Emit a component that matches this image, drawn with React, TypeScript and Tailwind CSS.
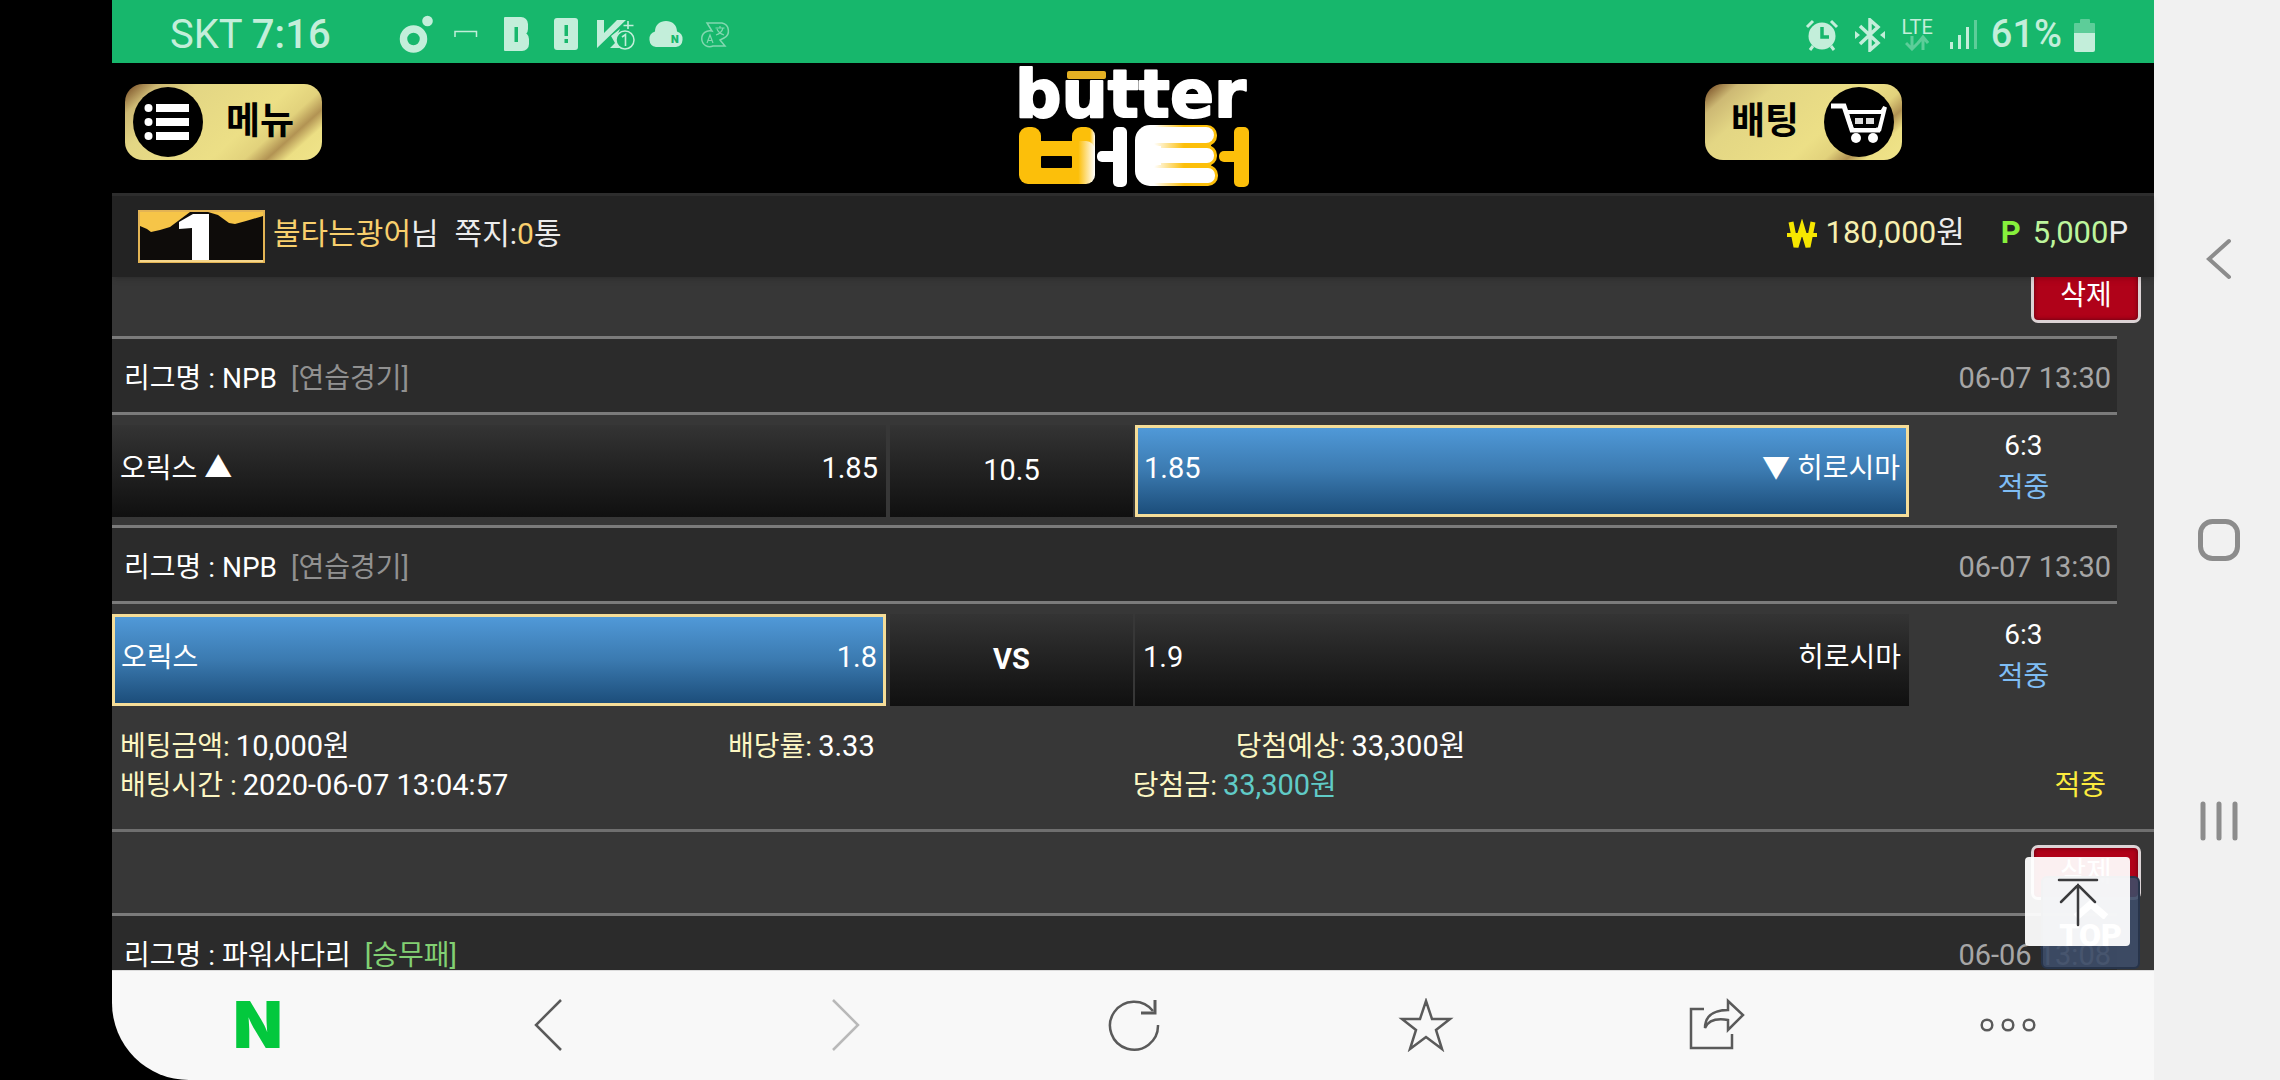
import type { ReactNode } from "react";

type Side = "home" | "away";

interface Game {
  id: number;
  league: string;
  kind: string;
  kindColor: string;
  date: string;
  home: string;
  homeRate: string;
  middle: string;
  middleBold?: boolean;
  awayRate: string;
  away: string;
  picked: Side;
  score: string;
  result: string;
}

const games: Game[] = [
  {
    id: 1, league: "NPB", kind: "[연습경기]", kindColor: "text-[#919191]", date: "06-07 13:30",
    home: "오릭스 ▲", homeRate: "1.85", middle: "10.5", awayRate: "1.85", away: "▼ 히로시마",
    picked: "away", score: "6:3", result: "적중",
  },
  {
    id: 2, league: "NPB", kind: "[연습경기]", kindColor: "text-[#919191]", date: "06-07 13:30",
    home: "오릭스", homeRate: "1.8", middle: "VS", middleBold: true, awayRate: "1.9", away: "히로시마",
    picked: "home", score: "6:3", result: "적중",
  },
];

/* ── Status bar icons ── */

const StatusIcons = () => (
  <svg width="332" height="40" viewBox="398 14 332 40" fill="#c3eeda">
    <circle cx="412.500" cy="38" r="10" fill="none" stroke="#c3eeda" strokeWidth="7.500" />
    <circle cx="426.500" cy="20" r="5.300" />
    <path d="M454 36v-5.500h21.500V36" fill="none" stroke="#c3eeda" strokeWidth="1.500" />
    {/* band */}
    <rect x="503" y="16" width="12" height="34" rx="1" />
    <rect x="507" y="16" width="20" height="19" rx="7" />
    <rect x="507" y="31" width="21" height="19" rx="7" />
    <rect x="513.500" y="26" width="3.500" height="15" fill="#17b76c" />
    {/* alert */}
    <rect x="553" y="17" width="24" height="32" rx="3" />
    <rect x="563.500" y="24" width="3.500" height="11" fill="#17b76c" />
    <rect x="563.500" y="38" width="3.500" height="4" fill="#17b76c" />
    {/* vaccine */}
    <path d="M596 19h7v13l13-13h9l-29 28z" />
    <path d="M610 35l9-7-4 9 4 10h-10l5-5z" />
    <circle cx="624" cy="39" r="9" fill="#17b76c" stroke="#c3eeda" strokeWidth="1.500" />
    <path d="M627 20v8M622.500 24.500h10M621 36l3.500-2.500V45" fill="none" stroke="#c3eeda" strokeWidth="1.600" />
    {/* cloud */}
    <path d="M655 46a8 8 0 0 1-1-15.500C654 24 659 20 665 20s11 4 11 10.500a8 8 0 0 1-1 15.500z" />
    <text x="670" y="42" fontSize="10" fontWeight="900" fontFamily="Inter" fill="#17b76c">N</text>
    {/* translate */}
    <g fill="none" stroke="#82d8b0" strokeWidth="1.500">
      <path d="M706 22h15a8 8 0 0 1 2 15l-4 2 5 6h-12a8 8 0 1 1-1-15z" />
      <path d="M706 42l3-8 3 8M707 39.500h4M714.500 27h9M719 25v2M722 27c-1 4-4 6-7 7M716 28c1 3 4 5 7 6" strokeWidth="1.200" />
    </g>
  </svg>
);

const AlarmIcon = () => (
  <svg width="34" height="34" viewBox="0 0 34 34" fill="none" stroke="#c3eeda">
    <circle cx="17" cy="18" r="13.500" fill="#c3eeda" stroke="none" />
    <path d="M17 9v10h7" stroke="#17b76c" strokeWidth="3.500" />
    <path d="M2 9l6-6M32 9l-6-6M5 32l3-4M29 32l-3-4" strokeWidth="3" />
  </svg>
);

const BluetoothIcon = () => (
  <svg width="30" height="34" viewBox="0 0 30 34" fill="none" stroke="#c3eeda" strokeWidth="3.500">
    <path d="M5 8l18 17-8 7V2l8 7L5 26" />
    <path d="M0 13l5 4-5 4zM30 13l-5 4 5 4z" fill="#c3eeda" stroke="none" />
  </svg>
);

const SignalIcon = () => (
  <svg width="30" height="32" viewBox="0 0 30 32">
    <rect x="1" y="23" width="3" height="7" fill="#c3eeda" />
    <rect x="9" y="16" width="3" height="14" fill="#c3eeda" />
    <rect x="17" y="8" width="3" height="22" fill="#c3eeda" />
    <rect x="25" y="1" width="3" height="29" fill="#5dcd99" />
  </svg>
);

const BatteryIcon = () => (
  <svg width="22" height="34" viewBox="0 0 22 34">
    <path d="M6 5V2a1 1 0 0 1 1-1h8a1 1 0 0 1 1 1v3h4a1 1 0 0 1 1 1v10H0V6a1 1 0 0 1 1-1z" fill="#5dcd99" />
    <path d="M0 15h21v17a2 2 0 0 1-2 2H2a2 2 0 0 1-2-2z" fill="#c3eeda" />
  </svg>
);

/* ── Site icons ── */

const ListIcon = () => (
  <svg width="70" height="70" viewBox="0 0 70 70">
    <circle cx="35" cy="35" r="35" fill="#000" />
    <g fill="#fff">
      <circle cx="15.500" cy="21" r="4" />
      <circle cx="15.500" cy="35" r="4" />
      <circle cx="15.500" cy="49" r="4" />
      <rect x="23" y="17" width="33" height="8" />
      <rect x="23" y="31" width="33" height="8" />
      <rect x="23" y="45" width="33" height="8" />
    </g>
  </svg>
);

const CartIcon = () => (
  <svg width="70" height="70" viewBox="0 0 70 70">
    <circle cx="35" cy="35" r="35" fill="#000" />
    <path d="M7 19h13l8 24h28" fill="none" stroke="#fff" strokeWidth="5" />
    <path d="M22 25h36l3-5-6 24" fill="none" stroke="#fff" strokeWidth="4" />
    <path d="M26 29h30l-4 12H30z" fill="#000" />
    <path d="M31 31h8v6h-8zM42 31h8v6h-8z" fill="#ddd" />
    <circle cx="32" cy="51" r="5" fill="#fff" />
    <circle cx="49" cy="51" r="5" fill="#fff" />
  </svg>
);

const Logo = () => (
  <svg width="228" height="118" viewBox="0 0 228 118" className="overflow-visible" role="img" aria-label="butter 버터">
    <defs>
      <linearGradient id="fade" x1="0" x2="1">
        <stop offset="0.780" stopColor="#fcbf0a" />
        <stop offset="1" stopColor="#fff" />
      </linearGradient>
      <linearGradient id="edge" gradientUnits="userSpaceOnUse" x1="135" x2="165" y1="0" y2="0">
        <stop offset="0" stopColor="#fff" />
        <stop offset="1" stopColor="#fcbf0a" />
      </linearGradient>
    </defs>
    <text
      x="-4" y="47" fontSize="65" fontWeight="700" fontFamily="DejaVu Sans"
      fill="#fff" stroke="#fff" strokeWidth="2" strokeLinejoin="round"
    >
      butter
    </text>
    <rect x="48" y="1" width="39" height="8" rx="2" fill="#e3b023" />
    <g fill="#fcbf0a">
      <rect x="0" y="57" width="22" height="40" rx="9" />
      <rect x="53" y="57" width="23" height="40" rx="9" fill="url(#fade)" />
      <rect x="0" y="71" width="76" height="43" rx="9" fill="url(#fade)" />
      <rect x="22" y="86" width="31" height="12" rx="1" fill="#000" />
    </g>
    <rect x="94" y="57" width="14" height="60" rx="5" fill="#fff" />
    <rect x="78" y="81" width="24" height="11" rx="5" fill="#fff" />
    <rect x="116" y="55" width="60" height="61" rx="15" fill="#fff" />
    <g fill="url(#edge)">
      <rect x="130" y="55" width="68" height="21" rx="10" />
      <rect x="142" y="74" width="50" height="24" />
      <rect x="140" y="75" width="58" height="21" rx="10" />
      <rect x="130" y="95" width="69" height="21" rx="10" />
    </g>
    <g fill="#fff">
      <rect x="124" y="57" width="71" height="16" rx="8" />
      <rect x="124" y="78" width="71" height="15" rx="7" />
      <rect x="124" y="98" width="72" height="15" rx="7" />
    </g>
    <rect x="215" y="57" width="15" height="60" rx="5" fill="#fcbf0a" />
    <rect x="200" y="81" width="24" height="11" rx="5" fill="#fcbf0a" />
  </svg>
);

const RankBadge = () => (
  <svg width="127" height="53" viewBox="0 0 127 53" role="img" aria-label="레벨 1">
    <rect x="1" y="1" width="125" height="51" fill="#0e0c0a" stroke="#e3b454" strokeWidth="2" />
    <path d="M2 2h123v4l-17 5-11 3-6-1-11-8-10-3H52l-12 9-8 6-10 3-9 2-4-3-7-3z" fill="#f6c548" />
    <path d="M41 19v-7l14-8h16v47H54V18z" fill="#fff" />
    <path d="M2 51h123" stroke="#f6d68a" strokeWidth="2" />
  </svg>
);

/* ── Browser toolbar icons ── */

const Stroke = ({ color = "#5a5a5a", children }: { color?: string; children: ReactNode }) => (
  <svg width="58" height="54" viewBox="0 0 58 54" fill="none" stroke={color} strokeWidth="2.500">
    {children}
  </svg>
);

function GoldButton({ children }: { children: ReactNode }) {
  return (
    <button
      type="button"
      className="flex h-[76px] w-[197px] items-center justify-between rounded-[18px] bg-[linear-gradient(138deg,#6d401c_0%,#cdb974_12%,#e3d684_26%,#ecdf86_60%,#e2d27c_72%,#b29353_80%,#ecdf84_87%,#f0e48a_100%)] px-2 text-[37px] font-bold text-black"
    >
      {children}
    </button>
  );
}

function DeleteButton() {
  return (
    <button
      type="button"
      className="h-[55px] w-[110px] shrink-0 rounded-[7px] border-3 border-[#dcd3d5] bg-[#b00219] text-[28px] leading-none text-white shadow-[inset_0_0_4px_#5a0010]"
    >
      삭제
    </button>
  );
}

function LeagueRow({ league, kind, kindColor, date }: Pick<Game, "league" | "kind" | "kindColor" | "date">) {
  return (
    <div className="mr-[37px] flex h-[79px] shrink-0 items-center justify-between border-y-3 border-[#7b7b7b] bg-[#2b2b2b] pt-1.5 pr-1.5 pl-3 text-[28px] text-white">
      <div className="flex gap-3.5">
        <span>리그명 : {league}</span>
        <span className={kindColor}>{kind}</span>
      </div>
      <span className="text-[29px] text-[#a6a6a6]">{date}</span>
    </div>
  );
}

function TeamCell({ left, right, picked, className }: { left: ReactNode; right: ReactNode; picked: boolean; className: string }) {
  return (
    <div
      className={`flex items-center justify-between pb-1 text-[28px] ${className} ${
        picked
          ? "border-3 border-[#f5dd98] bg-linear-to-b from-[#5099d8] via-[#3b7ab0] to-[#1c4e7b] px-1.5"
          : "bg-linear-to-b from-[#343434] to-[#101010] px-2"
      }`}
    >
      {left}
      {right}
    </div>
  );
}

function GameRow({ game }: { game: Game }) {
  return (
    <div className="grid h-[110px] shrink-0 grid-cols-[38fr_12fr_38fr_12fr] pt-2.5 pb-2 text-white">
      <TeamCell
        className="mr-0.5"
        picked={game.picked === "home"}
        left={<span>{game.home}</span>}
        right={<span className="text-[29px]">{game.homeRate}</span>}
      />
      <div
        className={`ml-0.5 flex items-center justify-center bg-linear-to-b from-[#343434] to-[#101010] text-[29px] ${
          game.middleBold ? "font-bold" : ""
        }`}
      >
        {game.middle}
      </div>
      <TeamCell
        className="ml-0.5"
        picked={game.picked === "away"}
        left={<span className="text-[29px]">{game.awayRate}</span>}
        right={<span>{game.away}</span>}
      />
      <div className="flex flex-col items-center pr-4 text-[28px] leading-[42px]">
        <span>{game.score}</span>
        <span className="text-[#7fbdf4]">{game.result}</span>
      </div>
    </div>
  );
}

function Detail({ label, value, valueColor = "text-white" }: { label: string; value: string; valueColor?: string }) {
  return (
    <span className="inline-flex items-baseline gap-1.5 whitespace-nowrap">
      <span className="text-[28px] text-[#fdf7c3]">{label}</span>
      <span className={`text-[29px] ${valueColor}`}>{value}</span>
    </span>
  );
}

export default function App() {
  return (
    <div className="flex h-screen overflow-hidden bg-black pl-[112px] font-['Roboto','Noto_Sans_CJK_KR',sans-serif]">
      <div className="relative flex min-w-0 flex-1 flex-col">
        {/* ── Status bar ── */}
        <div className="flex h-[63px] shrink-0 items-center justify-between bg-[#17b76c] pt-1.5 pr-[58px] pl-[58px] text-[40px] text-[#c3eeda]">
          <div className="flex items-center gap-[68px]">
            <span>
              SKT <span className="font-medium">7:16</span>
            </span>
            <StatusIcons />
          </div>
          <div className="flex items-center gap-4">
            <AlarmIcon />
            <BluetoothIcon />
            <div className="flex flex-col items-center">
              <span className="text-[20px] leading-4">LTE</span>
              <svg width="24" height="16" viewBox="0 0 24 16" fill="none" stroke="#5dcd99" strokeWidth="3">
                <path d="M7 1v12M1 8l6 6 6-6M18 15V3M13 8l5-6 5 6" />
              </svg>
            </div>
            <div className="flex items-center gap-3">
              <SignalIcon />
              <span className="text-[38px] font-medium">61%</span>
              <BatteryIcon />
            </div>
          </div>
        </div>

        {/* ── Header ── */}
        <header className="grid h-[130px] shrink-0 grid-cols-[1fr_auto_1fr] bg-black">
          <div className="pt-[21px] pl-[13px]">
            <GoldButton>
              <ListIcon />
              <span className="pr-5">메뉴</span>
            </GoldButton>
          </div>
          <div className="pt-[7px]">
            <Logo />
          </div>
          <div className="flex justify-end pt-[21px] pr-[252px]">
            <GoldButton>
              <span className="pl-[18px]">배팅</span>
              <CartIcon />
            </GoldButton>
          </div>
        </header>

        {/* ── Member bar ── */}
        <div className="z-10 flex h-[84px] shrink-0 items-center justify-between border-t-3 border-[#2d2d2d] bg-[#232323] pr-[26px] pl-[26px] text-[30px] text-[#ececec] shadow-md">
          <div className="flex items-center gap-2">
            <RankBadge />
            <div className="flex gap-4 pb-1.5">
              <span>
                <span className="text-[#f8cf6d]">불타는광어</span>님
              </span>
              <span>
                쪽지:<span className="text-[#f8cf6d]">0</span>통
              </span>
            </div>
          </div>
          <div className="flex items-center pb-1.5 text-[31px]">
            <svg width="30" height="30" viewBox="0 0 30 30" fill="none" stroke="#f6e600" strokeWidth="5">
              <path d="M4 3l5 25 6-20 6 20 5-25" />
              <path d="M0 16h30" strokeWidth="4" />
            </svg>
            <span className="pl-2 text-[#f6efae]">180,000</span>
            <span>원</span>
            <span className="pl-9 font-bold text-[#86f03c]">P</span>
            <span className="pl-3 text-[#bdf59c]">5,000</span>
            <span>P</span>
          </div>
        </div>

        {/* ── Bet history ── */}
        <main className="flex min-h-0 flex-1 flex-col overflow-hidden bg-[#373737]">
          <div className="flex h-[59px] shrink-0 items-end justify-end pr-[13px] pb-[13px]">
            <DeleteButton />
          </div>

          {games.map((game) => (
            <div key={game.id} className="shrink-0">
              <LeagueRow league={game.league} kind={game.kind} kindColor={game.kindColor} date={game.date} />
              <GameRow game={game} />
            </div>
          ))}

          <div className="shrink-0 pt-[13px] pb-6 pl-2 leading-[39px]">
            <div className="flex h-[39px]">
              <div className="w-[20%]">
                <Detail label="베팅금액:" value="10,000원" />
              </div>
              <div className="w-[27%] text-center">
                <Detail label="배당률:" value="3.33" />
              </div>
              <div className="w-[27%] text-center">
                <Detail label="당첨예상:" value="33,300원" />
              </div>
            </div>
            <div className="flex h-[39px] pr-12">
              <div className="w-[51%]">
                <Detail label="배팅시간 :" value="2020-06-07 13:04:57" />
              </div>
              <div className="flex-1">
                <Detail label="당첨금:" value="33,300원" valueColor="text-[#60cbc7]" />
              </div>
              <span className="text-[28px] text-[#fdec3e]">적중</span>
            </div>
          </div>

          <div className="flex h-[84px] shrink-0 items-center justify-end border-t-3 border-[#6f6f6f] pr-[13px]">
            <DeleteButton />
          </div>
          <LeagueRow league="파워사다리" kind="[승무패]" kindColor="text-[#82d073]" date="06-06 13:08" />
        </main>

        {/* ── Scroll to top: the site's own button, with the browser's on top of it ── */}
        <a
          href="#top"
          className="absolute right-3.5 bottom-[111px] flex h-[93px] w-[99px] flex-col items-center justify-end rounded-md border-2 border-[#27344a] bg-[#3d4c68]/90 pb-4 text-[32px] leading-8 font-black text-white"
        >
          <svg width="36" height="20" viewBox="0 0 36 20" fill="none" stroke="#fff" strokeWidth="7">
            <path d="M3 18L18 5l15 13" />
          </svg>
          TOP
        </a>
        <button
          type="button"
          aria-label="맨 위로"
          className="absolute right-6 bottom-[134px] flex h-[89px] w-[105px] items-center justify-center rounded-sm bg-white/94"
        >
          <svg width="42" height="50" viewBox="0 0 42 50" fill="none" stroke="#3b3b3d" strokeWidth="2.500" strokeLinecap="round">
            <path d="M2 3h38M21 8v40M4 25L21 8l17 17" />
          </svg>
        </button>

        {/* ── Browser toolbar ── */}
        <nav className="grid h-[110px] shrink-0 grid-cols-7 place-items-center rounded-bl-[77px] border-t border-[#dcdcdc] bg-[#f8f8f8] pb-0.5">
          <button type="button" aria-label="네이버 홈" className="font-['Inter',sans-serif] text-[64px] leading-none font-black text-[#03c83d]">
            N
          </button>
          <button type="button" aria-label="뒤로">
            <Stroke><path d="M40 2L15 27l25 25" /></Stroke>
          </button>
          <button type="button" aria-label="앞으로">
            <Stroke color="#b9b9b9"><path d="M21 2l25 25-25 25" /></Stroke>
          </button>
          <button type="button" aria-label="새로고침">
            <Stroke>
              <path d="M54 27A24 24 0 1 1 49 13" />
              <path d="M51 2v13H37" strokeWidth="3" />
            </Stroke>
          </button>
          <button type="button" aria-label="즐겨찾기">
            <Stroke><path d="M30 3l6 18h18L40 32l6 19-16-12-16 12 6-19L6 21h18z" /></Stroke>
          </button>
          <button type="button" aria-label="공유">
            <Stroke>
              <path d="M17 11H4v39h41V36" />
              <path d="M41 3l15 14-15 15V22c-12-2-20 1-23 8 0-10 6-18 23-18z" />
            </Stroke>
          </button>
          <button type="button" aria-label="더보기">
            <Stroke>
              <circle cx="8" cy="27" r="5.300" />
              <circle cx="29" cy="27" r="5.300" />
              <circle cx="50" cy="27" r="5.300" />
            </Stroke>
          </button>
        </nav>
      </div>

      {/* ── System navigation ── */}
      <aside className="flex w-[126px] shrink-0 flex-col items-center justify-between bg-[#f1f1f1] py-[238px] pl-1">
        <button type="button" aria-label="이전">
          <svg width="42" height="42" viewBox="0 0 42 42" fill="none" stroke="#8c8c8c" strokeWidth="4" strokeLinecap="round">
            <path d="M31 3L11 21l20 18" />
          </svg>
        </button>
        <button type="button" aria-label="홈">
          <svg width="42" height="42" viewBox="0 0 42 42" fill="none" stroke="#8c8c8c" strokeWidth="5">
            <rect x="2.500" y="2.500" width="37" height="37" rx="12" />
          </svg>
        </button>
        <button type="button" aria-label="최근 앱">
          <svg width="42" height="42" viewBox="0 0 42 42" stroke="#8c8c8c" strokeWidth="5" strokeLinecap="round">
            <path d="M5 4v34M21 4v34M37 4v34" />
          </svg>
        </button>
      </aside>
    </div>
  );
}
